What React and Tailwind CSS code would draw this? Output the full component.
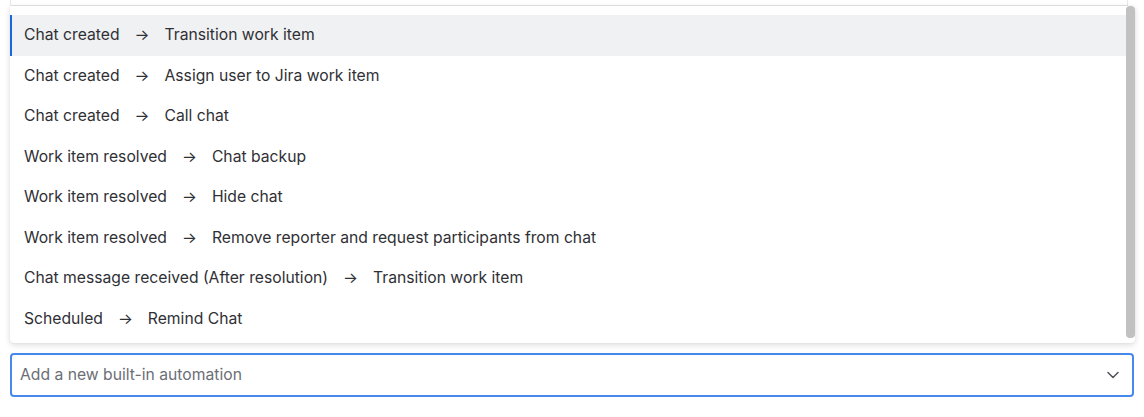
import React from 'react';

const items = [
  ['Chat created', 'Transition work item'],
  ['Chat created', 'Assign user to Jira work item'],
  ['Chat created', 'Call chat'],
  ['Work item resolved', 'Chat backup'],
  ['Work item resolved', 'Hide chat'],
  ['Work item resolved', 'Remove reporter and request participants from chat'],
  ['Chat message received (After resolution)', 'Transition work item'],
  ['Scheduled', 'Remind Chat'],
];

export default function App() {
  return (
    <div className="w-[1144px] h-[417px] bg-white px-[10px] font-['Inter',sans-serif] text-[15.7px] text-[#2f3035] overflow-hidden">
      {/* card behind the menu */}
      <div className="h-[6px] w-[1118px] border-x border-b border-[#e6e7ea] bg-white" />

      {/* dropdown menu */}
      <div className="relative h-[337px] w-[1125px] bg-white rounded-b-[4px] shadow-[0_2px_6px_rgba(0,0,0,0.14),0_0_1px_rgba(0,0,0,0.12)] pt-[9px]">
        <div className="mr-[9px]">
          {items.map(([from, to], i) => (
            <div
              key={i}
              className={
                'h-[40.5px] flex items-center pl-[12px] ' +
                (i === 0 ? 'bg-[#f0f1f2] border-l-2 border-[#1868db]' : 'border-l-2 border-transparent')
              }
            >
              <span>{from}</span>
              <span className="mx-[15px]">→</span>
              <span>{to}</span>
            </div>
          ))}
        </div>
        <div className="absolute right-0 top-0 w-[9px] h-[332px] rounded-[4px] bg-[#c1c1c1]" />
      </div>

      {/* select input */}
      <div className="mt-[10px] h-[44px] w-[1124px] border-2 border-[#4688ec] rounded-[4px] flex items-center justify-between pl-[8px] pr-[13px]">
        <span className="text-[#6b6e76]">Add a new built-in automation</span>
        <svg width="12" height="8" viewBox="0 0 12 8" fill="none" stroke="#505258" strokeWidth="1.5" strokeLinecap="round" strokeLinejoin="round">
          <path d="M1 1.5l5 5 5-5" />
        </svg>
      </div>
    </div>
  );
}
